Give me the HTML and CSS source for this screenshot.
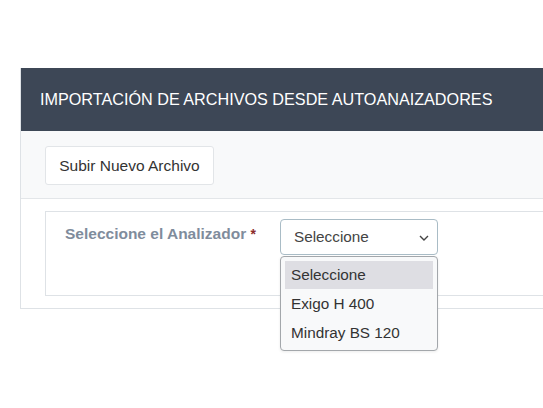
FILE: index.html
```html
<!DOCTYPE html>
<html lang="es">
<head>
<meta charset="utf-8">
<title>Importación de archivos</title>
<link rel="stylesheet" href="styles.css">
</head>
<body>
<div class="page">
  <div class="card">
    <div class="card-header">IMPORTACIÓN DE ARCHIVOS DESDE AUTOANAIZADORES</div>
    <div class="toolbar">
      <button class="btn" type="button">Subir Nuevo Archivo</button>
    </div>
    <div class="card-body">
      <div class="inner">
        <div class="label">Seleccione el Analizador <span class="req">*</span></div>
        <div class="select-wrap">
          <div class="select">
            <span>Seleccione</span>
            <svg class="chev" width="10" height="6" viewBox="0 0 10 6"><path d="M1 1 L5 5 L9 1" fill="none" stroke="#444" stroke-width="1.4"/></svg>
          </div>
          <ul class="menu">
            <li class="active">Seleccione</li>
            <li>Exigo H 400</li>
            <li>Mindray BS 120</li>
          </ul>
        </div>
      </div>
    </div>
  </div>
</div>
</body>
</html>
```
FILE: styles.css
```css
html, body {
  margin: 0;
  padding: 0;
  background: #ffffff;
}
body {
  font-family: "Liberation Sans", Arial, sans-serif;
  color: #333;
  min-height: 408px;
}
.page {
  padding: 68px 0 0 20px;
  min-height: 408px;
  box-sizing: border-box;
}
.card {
  border: 1px solid #dee2e6;
  border-top: none;
  border-right: none;
}
.card-header {
  background: #3d4756;
  color: #ffffff;
  height: 63px;
  padding-left: 19px;
  display: flex;
  align-items: center;
  font-size: 16.2px;
  white-space: nowrap;
}
.toolbar {
  background: #f8f9fa;
  padding: 15px 24px 13px;
  border-bottom: 1px solid #e3e6e9;
}
.btn {
  display: block;
  width: 169px;
  height: 39px;
  background: #ffffff;
  border: 1px solid #e2e5e8;
  border-radius: 3px;
  font-family: "Liberation Sans", Arial, sans-serif;
  font-size: 15.5px;
  color: #333;
  padding: 0;
}
.card-body {
  padding: 12px 0 12px 24px;
}
.inner {
  border: 1px solid #dee2e6;
  border-right: none;
  display: flex;
  align-items: flex-start;
  padding: 7px 0 0 19px;
  box-sizing: border-box;
  height: 85px;
}
.label {
  width: 215px;
  flex: none;
  padding-top: 6px;
  font-weight: bold;
  font-size: 15.5px;
  color: #7f8c9c;
}
.req {
  color: #8b2b2b;
  font-size: 14px;
}
.select-wrap {
  position: relative;
}
.select {
  width: 158px;
  height: 36px;
  box-sizing: border-box;
  border: 1px solid #a9bcc6;
  border-radius: 4px;
  background: #fff;
  display: flex;
  align-items: center;
  justify-content: space-between;
  padding: 0 8px 0 13px;
  font-size: 15.3px;
  color: #444;
}
.chev {
  margin-top: 1px;
}
.menu {
  position: absolute;
  top: 37px;
  left: 0;
  width: 158px;
  box-sizing: border-box;
  margin: 0;
  list-style: none;
  padding: 4px 4px 2px;
  background: #f8f9fa;
  border: 1px solid #a3a7ab;
  border-radius: 4px;
  box-shadow: 0 1px 3px rgba(0,0,0,0.08);
  z-index: 2;
}
.menu li {
  height: 29px;
  line-height: 28px;
  padding-left: 6px;
  font-size: 15.3px;
  color: #333;
}
.menu li.active {
  background: #dedee3;
  height: 28px;
  margin-bottom: 1px;
}
```
